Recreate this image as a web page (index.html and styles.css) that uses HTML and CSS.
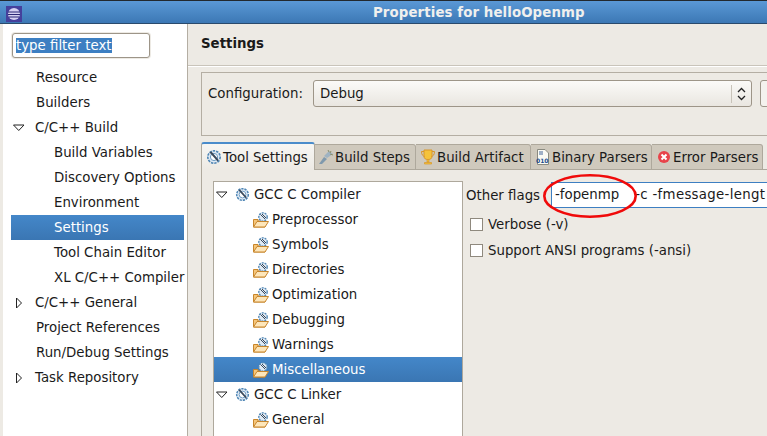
FILE: index.html
```html
<!DOCTYPE html>
<html lang="en">
<head>
    <meta charset="UTF-8">
    <title>Properties for helloOpenmp</title>
    <link rel="stylesheet" href="styles.css">
</head>
<body>
    <svg class="defs" width="0" height="0">
        <symbol id="gear" viewBox="0 0 16 16">
            <circle cx="8" cy="8" r="6.2" fill="#dfe9f3" stroke="#4f86b5" stroke-width="1.6" stroke-dasharray="2.4 1"/>
            <circle cx="8" cy="8" r="3.6" fill="#fff" stroke="#6d9cc4"/>
            <path d="M4 3l8 9M5 3l7 8" stroke="#3b4a5c" stroke-width="1.2"/>
        </symbol>
        <symbol id="folder" viewBox="0 0 16 16">
            <path d="M.5 15V7.500H5V9H12V15Z" fill="#f5c67a" stroke="#c8862c"/>
            <circle cx="10" cy="5" r="4.200" fill="#dfe9f3" stroke="#4f86b5" stroke-width="1.300" stroke-dasharray="2 1"/>
            <path d="M7.500 2.500l4.500 4.500M9 2l4 4" stroke="#3b4a5c"/>
            <path d="M.5 15L4 9.500H15.500L12 15Z" fill="#fde6ba" stroke="#c8862c"/>
        </symbol>
        <symbol id="open" viewBox="0 0 12 12">
            <path d="M.5 3H11L5.750 8.500Z" fill="#fff" stroke="#222"/>
        </symbol>
        <symbol id="closed" viewBox="0 0 12 12">
            <path d="M3.500 1V11L8.500 6Z" fill="#fff" stroke="#222"/>
        </symbol>
    </svg>

    <header class="titlebar">
        <svg class="app-icon" viewBox="0 0 16 16" width="16" height="16">
            <rect width="16" height="16" fill="#45409c"/>
            <circle cx="8" cy="8" r="6" fill="#d5d2f2"/>
            <path d="M2 6H14M2 8.500H14M3 11H13" stroke="#2b2874" stroke-width="1"/>
        </svg>
        <span class="title">Properties for helloOpenmp</span>
    </header>

    <div class="window">
        <aside class="sidebar">
            <div class="filter"><div class="filter-box"><span class="filter-text">type filter text</span></div></div>
            <ul class="nav">
                <li class="row"><span class="twisty"></span>Resource</li>
                <li class="row"><span class="twisty"></span>Builders</li>
                <li class="row"><svg class="twisty"><use href="#open"/></svg>C/C++ Build</li>
                <li class="row sub">Build Variables</li>
                <li class="row sub">Discovery Options</li>
                <li class="row sub">Environment</li>
                <li class="row sub selected">Settings</li>
                <li class="row sub">Tool Chain Editor</li>
                <li class="row sub">XL C/C++ Compiler</li>
                <li class="row"><svg class="twisty"><use href="#closed"/></svg>C/C++ General</li>
                <li class="row"><span class="twisty"></span>Project References</li>
                <li class="row"><span class="twisty"></span>Run/Debug Settings</li>
                <li class="row"><svg class="twisty"><use href="#closed"/></svg>Task Repository</li>
            </ul>
        </aside>

        <main class="content">
            <h1 class="page-title">Settings</h1>
            <div class="config-group">
                <label class="config-label">Configuration:</label>
                <div class="combo">
                    <span class="combo-value">Debug</span>
                    <span class="combo-arrows">
                        <svg viewBox="0 0 9 14" width="9" height="14"><path d="M1 5L4.500 1.500L8 5M1 9L4.500 12.500L8 9" fill="none" stroke="#222" stroke-width="1.300"/></svg>
                    </span>
                </div>
                <div class="combo-next"></div>
            </div>

            <div class="tabs">
                <div class="tab active">
                    <svg class="tab-icon"><use href="#gear"/></svg>Tool Settings
                </div>
                <div class="tab steps">
                    <svg class="tab-icon" viewBox="0 0 16 16"><path d="M1 15L6 8L9 10L4 15Z" fill="#7f99ad"/><path d="M6 7L11 2L15 5L9 9Z" fill="#9fb3c2"/><path d="M10 1l1 2M13 2l-1 2M15 6l-3-1" stroke="#8a8f6a"/></svg>Build Steps
                </div>
                <div class="tab artifact">
                    <svg class="tab-icon" viewBox="0 0 16 16"><path d="M4 1H12V7C12 10 10 10.500 8 10.500C6 10.500 4 10 4 7Z" fill="#f5c33b" stroke="#d9962a"/><path d="M4 2.500H1.500C1.500 6 3 7 4.500 7.500M12 2.500H14.500C14.500 6 13 7 11.500 7.500" fill="none" stroke="#d9962a"/><path d="M7 10.500H9V13H7ZM4.500 13.500H11.500V15H4.500Z" fill="#f5c33b" stroke="#d9962a" stroke-width=".7"/></svg>Build Artifact
                </div>
                <div class="tab binary">
                    <svg class="tab-icon" viewBox="0 0 16 16"><path d="M2.500 .5H10L13.500 4V15.500H2.500Z" fill="#fbfbf4" stroke="#8a8a80"/><path d="M4 3H8M4 5H8" stroke="#44679a"/><text x="1" y="14" class="bits">010</text></svg>Binary Parsers
                </div>
                <div class="tab errors">
                    <svg class="tab-icon" viewBox="0 0 16 16"><circle cx="8" cy="8" r="6" fill="#e8434a"/><path d="M5.500 5.500L10.500 10.500M10.500 5.500L5.500 10.500" stroke="#fff" stroke-width="2"/></svg>Error Parsers
                </div>
                <div class="tab-rest"></div>
            </div>

            <div class="panel">
                <ul class="tool-tree">
                    <li class="tool-row top"><svg class="twisty"><use href="#open"/></svg><svg class="gear"><use href="#gear"/></svg>GCC C Compiler</li>
                    <li class="tool-row"><svg class="folder"><use href="#folder"/></svg>Preprocessor</li>
                    <li class="tool-row"><svg class="folder"><use href="#folder"/></svg>Symbols</li>
                    <li class="tool-row"><svg class="folder"><use href="#folder"/></svg>Directories</li>
                    <li class="tool-row"><svg class="folder"><use href="#folder"/></svg>Optimization</li>
                    <li class="tool-row"><svg class="folder"><use href="#folder"/></svg>Debugging</li>
                    <li class="tool-row"><svg class="folder"><use href="#folder"/></svg>Warnings</li>
                    <li class="tool-row selected"><svg class="folder"><use href="#folder"/></svg>Miscellaneous</li>
                    <li class="tool-row top"><svg class="twisty"><use href="#open"/></svg><svg class="gear"><use href="#gear"/></svg>GCC C Linker</li>
                    <li class="tool-row"><svg class="folder"><use href="#folder"/></svg>General</li>
                </ul>

                <div class="options">
                    <div class="flags-row">
                        <label class="flags-label">Other flags</label>
                        <div class="flags-input">-fopenmp<span class="flags-gap"></span><span class="flags-rest">-c -fmessage-lengt</span></div>
                    </div>
                    <label class="check"><span class="box"></span>Verbose (-v)</label>
                    <label class="check"><span class="box"></span>Support ANSI programs (-ansi)</label>
                </div>
            </div>
        </main>
    </div>

    <svg class="callout" viewBox="0 0 94 44" width="94" height="44">
        <ellipse cx="47" cy="22" rx="45.700" ry="20.700" fill="none" stroke="#f00a0a" stroke-width="2.600"/>
    </svg>
</body>
</html>
```

FILE: styles.css
```css
html, body {
    margin: 0;
    height: 100%;
}
body {
    position: relative;
    width: 767px;
    height: 436px;
    overflow: hidden;
    display: flex;
    flex-direction: column;
    font-family: "DejaVu Sans", sans-serif;
    font-size: 13.33px;
    color: #1a1a1a;
    background: #edeae4;
}
ul {
    list-style: none;
    margin: 0;
    padding: 0;
}
.defs {
    position: absolute;
}

/* title bar */
.titlebar {
    height: 24px;
    flex: none;
    box-sizing: border-box;
    display: flex;
    align-items: center;
    padding-left: 6px;
    background: linear-gradient(#5a98d6, #3c78b5);
    border-top: 1px solid #22282e;
    border-bottom: 1px solid #2a4a6c;
}
.app-icon {
    flex: none;
    margin-top: 3px;
}
.title {
    flex: none;
    margin-left: 351px;
    font-weight: bold;
    font-size: 13.33px;
    letter-spacing: 0.1px;
    color: #f0f0ee;
}

.window {
    flex: 1;
    display: flex;
    min-height: 0;
}

/* left tree */
.sidebar {
    width: 184px;
    margin-left: 3px;
    flex: none;
    background: #fff;
    border-right: 1px solid #b4aea3;
}
.filter {
    padding: 9px 0 7px 9px;
}
.filter-box {
    box-sizing: border-box;
    width: 138px;
    height: 25px;
    padding: 4px 3px 0;
    background: #fff;
    border: 1px solid #9d9588;
    border-radius: 3px;
    box-shadow: 0 0 0 1px #edeae4;
}
.filter-text {
    display: block;
    width: max-content;
    height: 15px;
    line-height: 15px;
    color: #fff;
    background: #3d7fc2;
}
.nav {
    padding-left: 8px;
    padding-right: 3px;
}
.row {
    height: 25px;
    display: flex;
    align-items: center;
    padding-left: 2px;
    white-space: nowrap;
}
.row.sub {
    padding-left: 43px;
}
.twisty {
    width: 12px;
    height: 12px;
    margin-right: 10px;
    flex: none;
}
span.twisty {
    margin-right: 11px;
}
.row.selected,
.tool-row.selected {
    color: #fff;
    background: linear-gradient(#4487c9, #3a76b3);
}

/* right part */
.content {
    flex: 1;
    min-width: 0;
    display: flex;
    flex-direction: column;
}
.page-title {
    margin: 0;
    height: 42px;
    flex: none;
    box-sizing: border-box;
    padding: 12px 0 0 13px;
    font-size: 13.33px;
    font-weight: bold;
    line-height: 16px;
    border-bottom: 1px solid #c9c4ba;
    box-shadow: 0 1px 0 #fff;
}
.config-group {
    height: 64px;
    margin: 6px 0 0 13px;
    box-sizing: border-box;
    flex: none;
    display: flex;
    align-items: flex-start;
    padding: 7px 0 0 6px;
    border: 1px solid #b4aea3;
    border-right: 0;
}
.config-label {
    width: 105px;
    flex: none;
    line-height: 27px;
}
.combo {
    width: 439px;
    height: 27px;
    flex: none;
    box-sizing: border-box;
    display: flex;
    align-items: center;
    justify-content: space-between;
    padding-left: 6px;
    background: linear-gradient(#fbfaf8, #e9e6e0);
    border: 1px solid #9d9588;
    border-radius: 3px;
}
.combo-arrows {
    width: 19px;
    height: 18px;
    display: flex;
    align-items: center;
    justify-content: center;
    border-left: 1px solid #c8c3b9;
}
.combo-next {
    width: 20px;
    height: 27px;
    margin-left: 8px;
    flex: none;
    box-sizing: border-box;
    background: #f4f2ee;
    border: 1px solid #9d9588;
    border-radius: 3px;
}

/* tabs */
.tabs {
    height: 28px;
    flex: none;
    display: flex;
    align-items: flex-end;
    margin: 6px 0 0 13px;
}
.tab {
    height: 26px;
    box-sizing: border-box;
    flex: none;
    display: flex;
    align-items: center;
    padding-left: 4px;
    background: #cfc9bd;
    border: 1px solid #aea89c;
    border-left: 0;
    border-radius: 0 3px 0 0;
}
.tab-icon {
    width: 16px;
    height: 16px;
    margin-right: 1px;
    flex: none;
}
.tab.active {
    width: 114px;
    height: 28px;
    padding-left: 4px;
    background: linear-gradient(#f7f6f3, #edeae4);
    border: 1px solid #aea89c;
    border-top: 2px solid #4a8ccb;
    border-bottom: 0;
    border-radius: 3px 3px 0 0;
}
.tab.steps {
    width: 101px;
    padding-left: 3px;
}
.tab.artifact {
    width: 115px;
}
.tab.binary {
    width: 121px;
}
.tab.errors {
    width: 111px;
}
.tab-rest {
    flex: 1;
    border-bottom: 1px solid #aea89c;
}
.bits {
    font-size: 6px;
    font-weight: bold;
    fill: #1f4f8f;
}

/* tab body */
.panel {
    flex: 1;
    min-height: 0;
    display: flex;
    margin-left: 13px;
    padding: 11px 0 0 11px;
    border-left: 1px solid #aea89c;
}
.tool-tree {
    width: 248px;
    flex: none;
    background: #fff;
    border: 1px solid #aea89c;
    border-bottom: 0;
}
.tool-row {
    height: 25px;
    display: flex;
    align-items: center;
    padding-left: 39px;
}
.tool-row.top {
    padding-left: 2px;
}
.tool-row .twisty {
    margin-right: 7px;
}
.gear {
    width: 15px;
    height: 15px;
    margin-right: 4px;
    flex: none;
}
.folder {
    width: 16px;
    height: 16px;
    margin-right: 3px;
    flex: none;
}
.options {
    flex: 1;
    min-width: 0;
    padding-left: 3px;
}
.flags-row {
    display: flex;
    align-items: center;
    height: 26px;
    margin: 1px 0 3px;
}
.flags-label {
    width: 85px;
    flex: none;
}
.flags-input {
    flex: 1;
    height: 26px;
    box-sizing: border-box;
    padding-left: 3px;
    line-height: 24px;
    white-space: nowrap;
    overflow: hidden;
    background: #fff;
    border: 1px solid #3d7fc2;
    border-right: 0;
}
.flags-gap {
    display: inline-block;
    width: 16px;
}
.flags-rest {
    letter-spacing: 0.3px;
}
.check {
    display: flex;
    align-items: center;
    height: 26px;
}
.box {
    width: 11px;
    height: 11px;
    margin: 0 5px 0 4px;
    flex: none;
    background: #fff;
    border: 1px solid #8f897e;
}

/* red ring drawn over the screenshot */
.callout {
    position: absolute;
    left: 543px;
    top: 174px;
}
```
